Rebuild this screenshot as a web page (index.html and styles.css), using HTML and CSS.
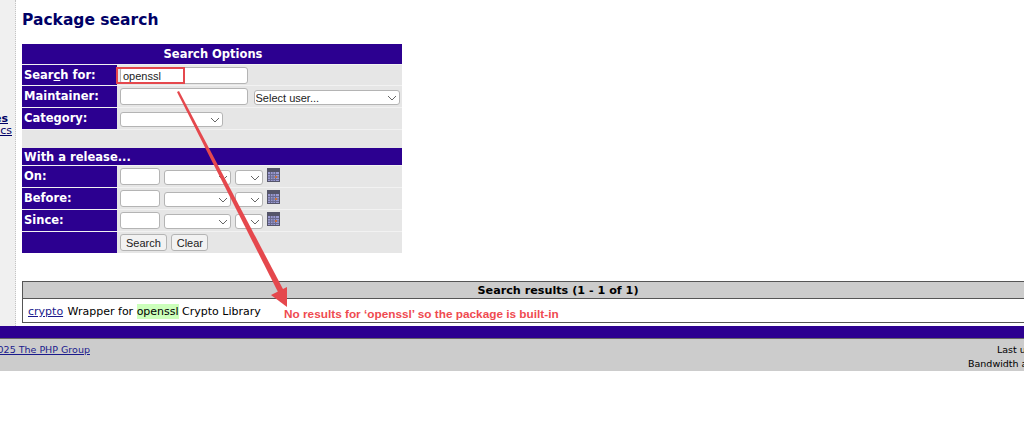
FILE: index.html
```html
<!DOCTYPE html>
<html lang="en">
<head>
  <meta charset="UTF-8" />
  <title>Package search</title>
  <link rel="stylesheet" href="styles.css">
</head>
<body>
<div class="page">
  <div class="columns">
    <nav class="sidebar">
      <a href="#" class="nav-main">Packages</a>
      <a href="#" class="nav-sub">Statistics</a>
    </nav>
    <main class="content">
      <h1>Package search</h1>

      <table class="options">
        <tr><th colspan="2" class="title">Search Options</th></tr>
        <tr class="row row-short">
          <th>Sear<u>c</u>h for:</th>
          <td><input type="text" class="text-wide" value="openssl"></td>
        </tr>
        <tr class="row">
          <th>Maintainer:</th>
          <td>
            <input type="text" class="text-wide">
            <select class="sel-user"><option>Select user...</option></select>
          </td>
        </tr>
        <tr class="row">
          <th>Category:</th>
          <td><select class="sel-cat"><option></option></select></td>
        </tr>
        <tr class="spacer"><td colspan="2"></td></tr>
        <tr><th colspan="2" class="subtitle">With a release...</th></tr>
        <tr class="row">
          <th>On:</th>
          <td>
            <input type="text" class="text-year">
            <select class="sel-month"><option></option></select>
            <select class="sel-day"><option></option></select>
            <svg class="cal" width="13" height="14" viewBox="0 0 13 14"><use href="#cal"/></svg>
          </td>
        </tr>
        <tr class="row">
          <th>Before:</th>
          <td>
            <input type="text" class="text-year">
            <select class="sel-month"><option></option></select>
            <select class="sel-day"><option></option></select>
            <svg class="cal" width="13" height="14" viewBox="0 0 13 14"><use href="#cal"/></svg>
          </td>
        </tr>
        <tr class="row">
          <th>Since:</th>
          <td>
            <input type="text" class="text-year">
            <select class="sel-month"><option></option></select>
            <select class="sel-day"><option></option></select>
            <svg class="cal" width="13" height="14" viewBox="0 0 13 14"><use href="#cal"/></svg>
          </td>
        </tr>
        <tr class="row row-short">
          <th></th>
          <td><button>Search</button> <button class="btn-clear">Clear</button></td>
        </tr>
      </table>

      <table class="results">
        <tr><th>Search results (1 - 1 of 1)</th></tr>
        <tr><td><a href="#">crypto</a> Wrapper for <span class="hit">openssl</span> Crypto Library</td></tr>
      </table>
    </main>
  </div>

  <footer>
    <div class="foot-bar"></div>
    <div class="foot-info">
      <a href="#">&copy;2025 The PHP Group</a>
      <div class="foot-right">
        <div class="last">Last updated: Mon Jan 6 2025</div>
        <div>Bandwidth and hardware provided by</div>
      </div>
    </div>
  </footer>
</div>

<!-- screenshot annotation -->
<div class="mark-box"></div>
<svg class="mark-arrow" width="320" height="320" viewBox="0 0 320 320">
  <polygon points="177,92 179,91 284,291 279,294" fill="#e5484d"/>
  <polygon points="287,307 271,295 287,287" fill="#e5484d"/>
</svg>
<div class="mark-text">No results for ‘openssl’ so the package is built-in</div>

<svg class="defs" width="0" height="0">
  <symbol id="cal" viewBox="0 0 13 14">
    <rect width="13" height="14" fill="#55556a"/>
    <rect x="1" y="4" width="11" height="9" fill="#9a9ad0"/>
    <path d="M1 6.500h11M1 9h11M1 11.500h11M3.500 4v9M6 4v9M8.500 4v9" stroke="#6a6a90" stroke-width="1"/>
    <rect x="8" y="8" width="2" height="2" fill="#c9703a"/>
  </symbol>
</svg>
</body>
</html>
```

FILE: styles.css
```css
* { box-sizing: border-box; }
html, body {
  margin: 0;
  padding: 0;
  height: 425px;
  overflow: hidden;
  background: #fff;
}
body {
  position: relative;
  font-family: "DejaVu Sans", Verdana, sans-serif;
  font-size: 11px;
  color: #000;
}
a { color: #000066; }

/* the page is scrolled sideways in the screenshot */
.page {
  width: 1300px;
  margin-left: -120px;
}
.columns {
  display: flex;
  height: 326px;
}
.sidebar {
  width: 136px;
  flex: none;
  background: #f0f0f0;
  border-right: 1px dotted #c4c4c4;
  padding-top: 113px;
  display: flex;
  flex-direction: column;
  align-items: flex-end;
  font-size: 11px;
  line-height: 12px;
}
.nav-main { font-weight: bold; margin-right: 7px; }
.nav-sub { margin-right: 3px; }
.content {
  flex: 1;
  padding: 12px 0 0 6px;
}
h1 {
  margin: 0 0 15px;
  font-size: 15.5px;
  line-height: 17px;
  color: #000066;
}

.options {
  width: 380px;
  border-collapse: separate;
  border-spacing: 0;
  background: #e6e6e6;
}
.options th {
  background: #2c0090;
  color: #fff;
  font-size: 11.5px;
  text-align: left;
  padding: 0 0 0 2px;
  border-bottom: 1px solid #f2f2f2;
}
.options .title {
  height: 21px;
  text-align: center;
}
.options .subtitle { height: 18px; }
.options .row th {
  width: 95px;
  height: 22px;
  vertical-align: top;
  padding-top: 3px;
}
.options .row-short th { height: 21px; }
.options .row td {
  padding: 2px 0 0 3px;
  vertical-align: top;
  border-bottom: 1px solid #f2f2f2;
  white-space: nowrap;
  line-height: 17px;
}
.options .row:last-child th,
.options .row:last-child td { border-bottom: 0; }
.spacer td { height: 18px; }

input, select, button {
  font-family: "Liberation Sans", Arial, sans-serif;
  font-size: 11px;
  margin: 0;
  vertical-align: top;
  background-color: #fff;
  border: 1px solid #b4b4b4;
  border-radius: 3px;
  color: #222;
}
input { height: 17px; padding: 0 2px; }
select {
  appearance: none;
  height: 15px;
  padding: 0 1px;
  margin-top: 2px;
  /* thin chevron like the mac control */
  background-image:
    linear-gradient(45deg, transparent 42%, #666 42%, #666 58%, transparent 58%),
    linear-gradient(-45deg, transparent 42%, #666 42%, #666 58%, transparent 58%);
  background-size: 4px 4px;
  background-repeat: no-repeat;
  background-position: right 7px center, right 3px center;
}
.text-wide { width: 128px; }
.text-year { width: 40px; }
.sel-user { width: 146px; margin-left: 2px; }
.sel-cat { width: 103px; }
.sel-month { width: 67px; }
.sel-day { width: 28px; margin-left: 1px; }
.cal { vertical-align: top; }
button {
  height: 17px;
  padding: 0 5px;
  background-color: #f2f2f2;
}
.btn-clear { width: 37px; padding: 0; margin-left: 1px; }

.results {
  width: 1200px;
  margin-top: 28px;
  border-collapse: collapse;
  border: 1px solid #555;
}
.results th {
  height: 17px;
  padding: 0 128px 0 0;
  background: #cccccc;
  font-size: 11.2px;
  border-bottom: 1px solid #555;
}
.results td {
  height: 24px;
  padding: 2px 0 0 5px;
  font-size: 11px;
  background: #fff;
}
.results a { color: #1a1a8c; margin-right: 1px; }
.hit { background: #ccffbb; padding: 1px 0; }

.foot-bar {
  height: 13px;
  background: #2c0090;
  border-bottom: 1px solid #666;
}
.foot-info {
  height: 32px;
  background: #cccccc;
  display: flex;
  justify-content: space-between;
  padding: 4px 0 0 102px;
  font-size: 9.5px;
  line-height: 14px;
}
.foot-info a { color: #1a1a8c; }
.foot-right {
  width: 212px;
  flex: none;
  white-space: nowrap;
}
.last { margin-left: 29px; }

/* annotation layer */
.mark-box {
  position: absolute;
  left: 116px;
  top: 67px;
  width: 69px;
  height: 17px;
  border: 2px solid #e5484d;
}
.mark-arrow {
  position: absolute;
  left: 0;
  top: 0;
}
.mark-text {
  position: absolute;
  left: 284px;
  top: 307px;
  font-family: "Liberation Sans", Arial, sans-serif;
  font-size: 11.8px;
  line-height: 14px;
  font-weight: bold;
  color: #ef4a50;
  white-space: nowrap;
}
.defs { position: absolute; }
```
